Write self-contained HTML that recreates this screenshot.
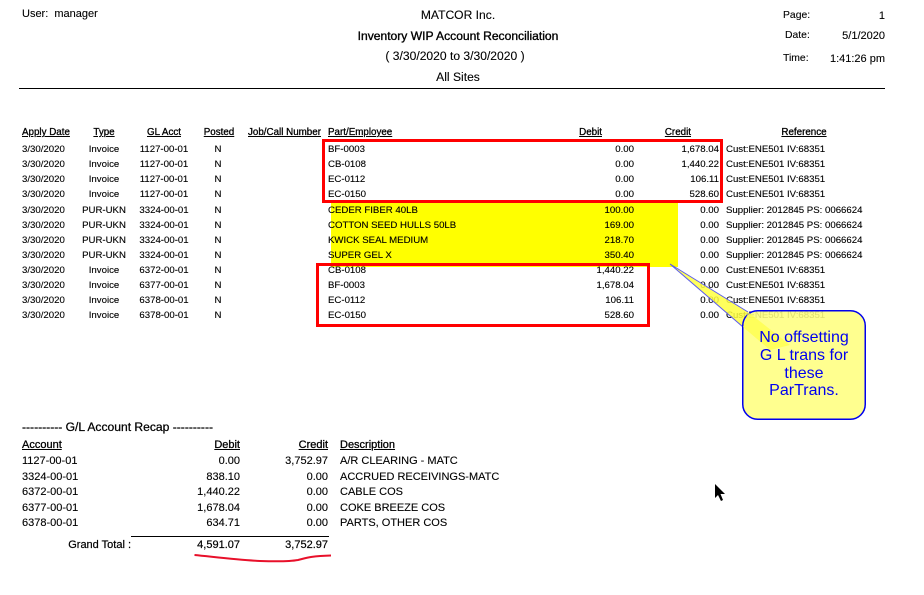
<!DOCTYPE html>
<html><head><meta charset="utf-8"><style>
html,body{margin:0;padding:0;background:#fff}
#p{position:relative;width:924px;height:595px;overflow:hidden;background:#fff;font-family:"Liberation Sans",Arial,sans-serif;color:#000}
#p span{position:absolute;white-space:pre;line-height:12px}
.w{position:absolute;left:0;width:924px;height:0}
.s{font-size:9.65px;-webkit-text-stroke:.12px #000}
.l{font-size:11px;-webkit-text-stroke:.1px #000}
.t{font-size:12.1px;-webkit-text-stroke:.1px #000}
.m{font-size:11px;-webkit-text-stroke:.12px #000}
.h{font-size:9.8px;text-decoration:underline;-webkit-text-stroke:.3px #000}
.c{transform:translateX(-50%)}
.r{transform:translateX(-100%)}
.box{position:absolute;border:3px solid #f00;box-sizing:border-box}
.b{font-size:16px;line-height:18px !important;color:#0000f0}
</style></head><body><div id="p">
<div style="position:absolute;left:331px;top:203px;width:347px;height:64px;background:#ff0"></div>
<div style="position:absolute;left:19px;top:88px;width:866px;height:1px;background:#000"></div>
<span class="l" style="left:22px;top:8px">User:  manager</span>
<span class="t c" style="left:458px;top:9px">MATCOR Inc.</span>
<span class="t c" style="left:458px;top:30px;-webkit-text-stroke:.35px #000">Inventory WIP Account Reconciliation</span>
<span class="t c" style="left:455px;top:50px">( 3/30/2020 to 3/30/2020 )</span>
<span class="t c" style="left:458px;top:71px">All Sites</span>
<span class="l" style="left:783px;top:10px;font-size:10.4px">Page:</span>
<span class="l r" style="left:885px;top:10px">1</span>
<span class="l" style="left:785px;top:30px;font-size:10.4px">Date:</span>
<span class="l r" style="left:885px;top:30px">5/1/2020</span>
<span class="l" style="left:783px;top:53px;font-size:10.4px">Time:</span>
<span class="l r" style="left:885px;top:53px">1:41:26 pm</span>

<div class="w" style="top:3px">
<span class="h" style="left:22px;top:124px">Apply Date</span>
<span class="h c" style="left:104px;top:124px">Type</span>
<span class="h c" style="left:164px;top:124px">GL Acct</span>
<span class="h c" style="left:219px;top:124px">Posted</span>
<span class="h" style="left:248px;top:124px">Job/Call Number</span>
<span class="h" style="left:328px;top:124px">Part/Employee</span>
<span class="h r" style="left:602px;top:124px">Debit</span>
<span class="h r" style="left:691px;top:124px">Credit</span>
<span class="h c" style="left:804px;top:124px">Reference</span>
</div>

<div class="w" style="top:1px">
<span class="s" style="left:22px;top:143px">3/30/2020</span><span class="s c" style="left:104px;top:143px">Invoice</span><span class="s c" style="left:164px;top:143px">1127-00-01</span><span class="s c" style="left:218px;top:143px">N</span><span class="s" style="left:328px;top:143px">BF-0003</span><span class="s r" style="left:634px;top:143px">0.00</span><span class="s r" style="left:719px;top:143px">1,678.04</span><span class="s" style="left:726px;top:143px">Cust:ENE501 IV:68351</span>
<span class="s" style="left:22px;top:158px">3/30/2020</span><span class="s c" style="left:104px;top:158px">Invoice</span><span class="s c" style="left:164px;top:158px">1127-00-01</span><span class="s c" style="left:218px;top:158px">N</span><span class="s" style="left:328px;top:158px">CB-0108</span><span class="s r" style="left:634px;top:158px">0.00</span><span class="s r" style="left:719px;top:158px">1,440.22</span><span class="s" style="left:726px;top:158px">Cust:ENE501 IV:68351</span>
<span class="s" style="left:22px;top:173px">3/30/2020</span><span class="s c" style="left:104px;top:173px">Invoice</span><span class="s c" style="left:164px;top:173px">1127-00-01</span><span class="s c" style="left:218px;top:173px">N</span><span class="s" style="left:328px;top:173px">EC-0112</span><span class="s r" style="left:634px;top:173px">0.00</span><span class="s r" style="left:719px;top:173px">106.11</span><span class="s" style="left:726px;top:173px">Cust:ENE501 IV:68351</span>
<span class="s" style="left:22px;top:188px">3/30/2020</span><span class="s c" style="left:104px;top:188px">Invoice</span><span class="s c" style="left:164px;top:188px">1127-00-01</span><span class="s c" style="left:218px;top:188px">N</span><span class="s" style="left:328px;top:188px">EC-0150</span><span class="s r" style="left:634px;top:188px">0.00</span><span class="s r" style="left:719px;top:188px">528.60</span><span class="s" style="left:726px;top:188px">Cust:ENE501 IV:68351</span>
<span class="s" style="left:22px;top:204px">3/30/2020</span><span class="s c" style="left:104px;top:204px">PUR-UKN</span><span class="s c" style="left:164px;top:204px">3324-00-01</span><span class="s c" style="left:218px;top:204px">N</span><span class="s" style="left:328px;top:204px">CEDER FIBER 40LB</span><span class="s r" style="left:634px;top:204px">100.00</span><span class="s r" style="left:719px;top:204px">0.00</span><span class="s" style="left:726px;top:204px">Supplier: 2012845 PS: 0066624</span>
<span class="s" style="left:22px;top:219px">3/30/2020</span><span class="s c" style="left:104px;top:219px">PUR-UKN</span><span class="s c" style="left:164px;top:219px">3324-00-01</span><span class="s c" style="left:218px;top:219px">N</span><span class="s" style="left:328px;top:219px">COTTON SEED HULLS 50LB</span><span class="s r" style="left:634px;top:219px">169.00</span><span class="s r" style="left:719px;top:219px">0.00</span><span class="s" style="left:726px;top:219px">Supplier: 2012845 PS: 0066624</span>
<span class="s" style="left:22px;top:234px">3/30/2020</span><span class="s c" style="left:104px;top:234px">PUR-UKN</span><span class="s c" style="left:164px;top:234px">3324-00-01</span><span class="s c" style="left:218px;top:234px">N</span><span class="s" style="left:328px;top:234px">KWICK SEAL MEDIUM</span><span class="s r" style="left:634px;top:234px">218.70</span><span class="s r" style="left:719px;top:234px">0.00</span><span class="s" style="left:726px;top:234px">Supplier: 2012845 PS: 0066624</span>
<span class="s" style="left:22px;top:249px">3/30/2020</span><span class="s c" style="left:104px;top:249px">PUR-UKN</span><span class="s c" style="left:164px;top:249px">3324-00-01</span><span class="s c" style="left:218px;top:249px">N</span><span class="s" style="left:328px;top:249px">SUPER GEL X</span><span class="s r" style="left:634px;top:249px">350.40</span><span class="s r" style="left:719px;top:249px">0.00</span><span class="s" style="left:726px;top:249px">Supplier: 2012845 PS: 0066624</span>
<span class="s" style="left:22px;top:264px">3/30/2020</span><span class="s c" style="left:104px;top:264px">Invoice</span><span class="s c" style="left:164px;top:264px">6372-00-01</span><span class="s c" style="left:218px;top:264px">N</span><span class="s" style="left:328px;top:264px">CB-0108</span><span class="s r" style="left:634px;top:264px">1,440.22</span><span class="s r" style="left:719px;top:264px">0.00</span><span class="s" style="left:726px;top:264px">Cust:ENE501 IV:68351</span>
<span class="s" style="left:22px;top:279px">3/30/2020</span><span class="s c" style="left:104px;top:279px">Invoice</span><span class="s c" style="left:164px;top:279px">6377-00-01</span><span class="s c" style="left:218px;top:279px">N</span><span class="s" style="left:328px;top:279px">BF-0003</span><span class="s r" style="left:634px;top:279px">1,678.04</span><span class="s r" style="left:719px;top:279px">0.00</span><span class="s" style="left:726px;top:279px">Cust:ENE501 IV:68351</span>
<span class="s" style="left:22px;top:294px">3/30/2020</span><span class="s c" style="left:104px;top:294px">Invoice</span><span class="s c" style="left:164px;top:294px">6378-00-01</span><span class="s c" style="left:218px;top:294px">N</span><span class="s" style="left:328px;top:294px">EC-0112</span><span class="s r" style="left:634px;top:294px">106.11</span><span class="s r" style="left:719px;top:294px">0.00</span><span class="s" style="left:726px;top:294px">Cust:ENE501 IV:68351</span>
<span class="s" style="left:22px;top:309px">3/30/2020</span><span class="s c" style="left:104px;top:309px">Invoice</span><span class="s c" style="left:164px;top:309px">6378-00-01</span><span class="s c" style="left:218px;top:309px">N</span><span class="s" style="left:328px;top:309px">EC-0150</span><span class="s r" style="left:634px;top:309px">528.60</span><span class="s r" style="left:719px;top:309px">0.00</span><span class="s" style="left:726px;top:309px">Cust:ENE501 IV:68351</span>
</div>

<div class="box" style="left:322px;top:139px;width:401px;height:64px"></div>
<div class="box" style="left:316px;top:263px;width:334px;height:64px"></div>

<svg style="position:absolute;left:0;top:0" width="924" height="595" viewBox="0 0 924 595">
<path d="M670 264 L748 312 L743 327 Z" fill="#ffff40" fill-opacity=".85" stroke="none"/>
<path d="M670 264 L748 312 M670 264 L743 327" fill="none" stroke="#5a5af0" stroke-width="1"/>
<rect x="742.750" y="310.750" width="122.500" height="108.500" rx="15" ry="15" fill="#ffff80" fill-opacity=".88" stroke="#0000ee" stroke-width="1.500"/>
<path d="M743 327 L748 312 L790 345 L770 350 Z" fill="#ffff44" fill-opacity=".7"/>
<path d="M194.500 555 C215 557 240 560 260 561 C275 561.500 290 561.500 298 560 C306 558 310 556 331 555.500" fill="none" stroke="#e8102a" stroke-width="2"/>
<path d="M715 484 L715 498 L718 495 L721 501 L723 500 L720.500 494 L725 494 Z" fill="#000"/>
</svg>
<span class="c b" style="left:804px;top:329px">No offsetting</span>
<span class="c b" style="left:804px;top:347px">G L trans for</span>
<span class="c b" style="left:804px;top:365px">these</span>
<span class="c b" style="left:804px;top:382px">ParTrans.</span>

<div class="w" style="top:1px">
<span class="t" style="left:22px;top:420px;-webkit-text-stroke:.25px #000">---------- G/L Account Recap ----------</span>
<span class="m" style="left:22px;top:438px;text-decoration:underline;-webkit-text-stroke:.3px #000">Account</span>
<span class="m r" style="left:240px;top:438px;text-decoration:underline;-webkit-text-stroke:.3px #000">Debit</span>
<span class="m r" style="left:328px;top:438px;text-decoration:underline;-webkit-text-stroke:.3px #000">Credit</span>
<span class="m" style="left:340px;top:438px;text-decoration:underline;-webkit-text-stroke:.3px #000">Description</span>

<span class="m" style="left:22px;top:454px">1127-00-01</span><span class="m r" style="left:240px;top:454px">0.00</span><span class="m r" style="left:328px;top:454px">3,752.97</span><span class="m" style="left:340px;top:454px">A/R CLEARING - MATC</span>
<span class="m" style="left:22px;top:470px">3324-00-01</span><span class="m r" style="left:240px;top:470px">838.10</span><span class="m r" style="left:328px;top:470px">0.00</span><span class="m" style="left:340px;top:470px">ACCRUED RECEIVINGS-MATC</span>
<span class="m" style="left:22px;top:485px">6372-00-01</span><span class="m r" style="left:240px;top:485px">1,440.22</span><span class="m r" style="left:328px;top:485px">0.00</span><span class="m" style="left:340px;top:485px">CABLE COS</span>
<span class="m" style="left:22px;top:501px">6377-00-01</span><span class="m r" style="left:240px;top:501px">1,678.04</span><span class="m r" style="left:328px;top:501px">0.00</span><span class="m" style="left:340px;top:501px">COKE BREEZE COS</span>
<span class="m" style="left:22px;top:516px">6378-00-01</span><span class="m r" style="left:240px;top:516px">634.71</span><span class="m r" style="left:328px;top:516px">0.00</span><span class="m" style="left:340px;top:516px">PARTS, OTHER COS</span>
<span class="m r" style="left:131px;top:538px;-webkit-text-stroke:.2px #000">Grand Total :</span>
<span class="m r" style="left:240px;top:538px;-webkit-text-stroke:.2px #000">4,591.07</span>
<span class="m r" style="left:328px;top:538px;-webkit-text-stroke:.2px #000">3,752.97</span>
</div>
<div style="position:absolute;left:131px;top:536px;width:198px;height:1px;background:#000"></div>
</div></body></html>
